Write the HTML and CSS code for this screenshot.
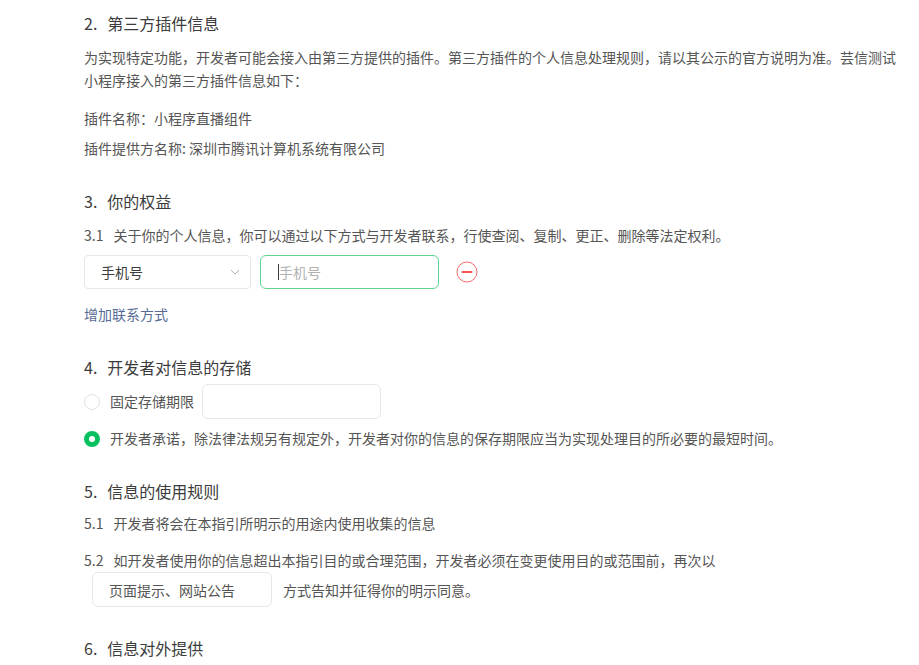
FILE: index.html
```html
<!DOCTYPE html>
<html lang="zh-CN">
<head>
    <meta charset="UTF-8">
    <meta name="viewport" content="width=device-width, initial-scale=1.0">
    <title>用户隐私保护指引</title>
    <link rel="stylesheet" href="styles.css">
</head>
<body>
    <main class="guide">
        <!-- 2. 第三方插件 -->
        <section class="block block-first">
            <h2 class="block-title"><span class="num">2.</span>第三方插件信息</h2>
            <p class="para para-intro">为实现特定功能，开发者可能会接入由第三方提供的插件。第三方插件的个人信息处理规则，请以其公示的官方说明为准。芸信测试小程序接入的第三方插件信息如下：</p>
            <p class="para plugin-name">插件名称：小程序直播组件</p>
            <p class="para plugin-owner">插件提供方名称: 深圳市腾讯计算机系统有限公司</p>
        </section>

        <!-- 3. 权益 -->
        <section class="block">
            <h2 class="block-title"><span class="num">3.</span>你的权益</h2>
            <p class="para sub"><span class="sub-num">3.1</span>关于你的个人信息，你可以通过以下方式与开发者联系，行使查阅、复制、更正、删除等法定权利。</p>
            <div class="contact-row">
                <div class="select">
                    <span>手机号</span>
                    <svg class="chevron" width="12" height="12" viewBox="0 0 12 12"><path d="M2 4l4 4 4-4" fill="none" stroke="#b2b2b2" stroke-width="1"/></svg>
                </div>
                <div class="text-input focused">
                    <span class="caret"></span><span class="placeholder">手机号</span>
                </div>
                <svg class="remove" width="22" height="22" viewBox="0 0 22 22">
                    <circle cx="11" cy="11" r="10" fill="none" stroke="#fa6b6b" stroke-width="1"/>
                    <path d="M6.5 11h9" stroke="#fa5151" stroke-width="2" stroke-linecap="round"/>
                </svg>
            </div>
            <a class="add-link" href="#">增加联系方式</a>
        </section>

        <!-- 4. 存储 -->
        <section class="block">
            <h2 class="block-title"><span class="num">4.</span>开发者对信息的存储</h2>
            <label class="radio-row radio-row-input">
                <span class="radio"></span>
                <span>固定存储期限</span>
                <span class="text-input period"></span>
            </label>
            <label class="radio-row">
                <span class="radio checked"></span>
                <span>开发者承诺，除法律法规另有规定外，开发者对你的信息的保存期限应当为实现处理目的所必要的最短时间。</span>
            </label>
        </section>

        <!-- 5. 使用规则 -->
        <section class="block">
            <h2 class="block-title"><span class="num">5.</span>信息的使用规则</h2>
            <p class="para sub sub-51"><span class="sub-num">5.1</span>开发者将会在本指引所明示的用途内使用收集的信息</p>
            <p class="para sub sub-52"><span class="sub-num">5.2</span>如开发者使用你的信息超出本指引目的或合理范围，开发者必须在变更使用目的或范围前，再次以</p>
            <div class="notice-row">
                <div class="text-input notice">页面提示、网站公告</div>
                <span>方式告知并征得你的明示同意。</span>
            </div>
        </section>

        <!-- 6. 对外提供 -->
        <section class="block">
            <h2 class="block-title"><span class="num">6.</span>信息对外提供</h2>
        </section>
    </main>
</body>
</html>
```

FILE: styles.css
```css
body {
    margin: 0;
    background-color: #ffffff;
    font-family: "Noto Sans CJK SC", "Noto Sans", sans-serif;
    color: #3c3c3c;
}

.guide {
    width: 818px;
    padding: 11px 0 0 84px;
}

.block {
    margin-top: 29px;
}

.block-first {
    margin-top: 0;
}

.block-title {
    margin: 0;
    font-size: 16px;
    font-weight: normal;
    line-height: 24px;
    color: #3c3c3c;
}

.num {
    margin-right: 10px;
}

.para {
    margin: 0;
    font-size: 14px;
    line-height: 23px;
    color: #555555;
}

.para-intro {
    margin-top: 11px;
}

.plugin-name {
    margin-top: 15px;
}

.plugin-owner {
    margin-top: 7px;
}

.sub {
    margin-top: 11px;
}

.sub-num {
    margin-right: 10px;
}

.sub-51 {
    margin-top: 9px;
}

.sub-52 {
    margin-top: 14px;
}

.contact-row {
    display: flex;
    align-items: center;
    margin-top: 8px;
}

.select {
    width: 167px;
    height: 34px;
    box-sizing: border-box;
    border: 1px solid #e7e7e7;
    border-radius: 4px;
    padding: 0 9px 0 16px;
    display: flex;
    align-items: center;
    justify-content: space-between;
    font-size: 14px;
    color: #3c3c3c;
}

.text-input {
    box-sizing: border-box;
    height: 35px;
    border: 1px solid #e7e7e7;
    border-radius: 6px;
    display: flex;
    align-items: center;
    font-size: 14px;
}

.focused {
    width: 179px;
    height: 34px;
    margin-left: 9px;
    padding-left: 17px;
    border-color: #5fd38f;
}

.caret {
    width: 1px;
    height: 16px;
    background-color: #3c3c3c;
}

.placeholder {
    color: #b2b2b2;
}

.remove {
    margin-left: 17px;
}

.add-link {
    display: block;
    margin-top: 14px;
    font-size: 14px;
    line-height: 23px;
    color: #576b95;
    text-decoration: none;
}

.radio-row {
    display: flex;
    align-items: center;
    gap: 10px;
    font-size: 14px;
    line-height: 23px;
    color: #555555;
    margin-top: 8px;
}

.radio-row-input {
    margin-top: 5px;
}

.radio-row-input .period {
    margin-left: -2px;
}

.radio {
    width: 16px;
    height: 16px;
    box-sizing: border-box;
    border: 1px solid #e0e0e0;
    border-radius: 50%;
    flex-shrink: 0;
}

.radio.checked {
    border: 5px solid #07c160;
    background-color: #ffffff;
}

.period {
    width: 179px;
}

.notice-row {
    display: flex;
    align-items: center;
    gap: 11px;
    margin-left: 8px;
    font-size: 14px;
    color: #555555;
}

.notice {
    width: 180px;
    padding-left: 16px;
    color: #555555;
}
```
